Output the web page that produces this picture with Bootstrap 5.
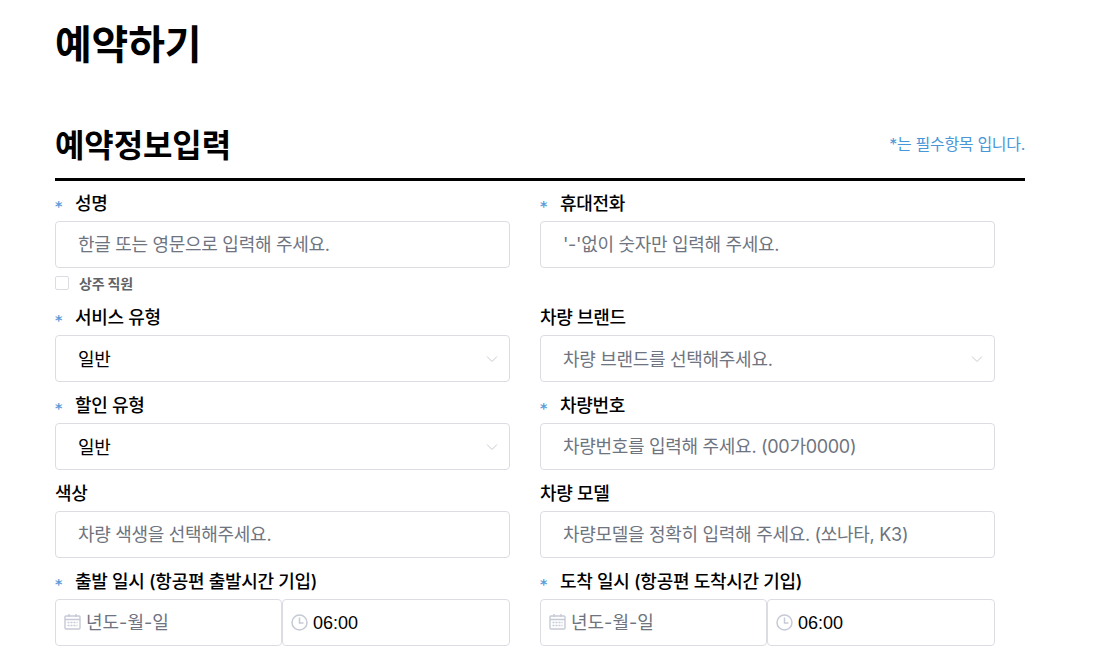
<!DOCTYPE html>
<html lang="ko">
<head>
  <meta charset="UTF-8" />
  <meta name="viewport" content="width=device-width, initial-scale=1.0"/>
  <title>예약하기</title>
  <link href="https://cdn.jsdelivr.net/npm/bootstrap@5.3.2/dist/css/bootstrap.min.css" rel="stylesheet" />
  <style>
    body {
      font-family: "Inter", "Noto Sans CJK KR", sans-serif;
      color: #000;
      overflow: hidden;
    }
    .page-wrap { width: 970px; margin-left: 55px; }
    .page-title {
      font-size: 40px;
      font-weight: 700;
      letter-spacing: -0.2px;
      line-height: 48px;
      margin: 21px 0 0;
    }
    .section-head {
      margin-top: 52px;
      height: 44px;
      border-bottom: 3px solid #000;
      box-sizing: content-box;
      padding-bottom: 13px;
    }
    .section-title {
      font-size: 32px;
      font-weight: 700;
      letter-spacing: -0.1px;
      line-height: 44px;
      margin: 6px 0 0;
    }
    .req-note { font-size: 16px; color: #4a97d8; letter-spacing: -0.3px; margin-top: 2px; }
    .form-cols {
      display: grid;
      grid-template-columns: 455px 455px;
      column-gap: 30px;
      row-gap: 10px;
      margin-top: 9px;
    }
    .fld-label {
      display: flex;
      align-items: center;
      font-size: 18px;
      font-weight: 500;
      line-height: 24px;
      height: 24px;
      padding-top: 4px;
      margin-bottom: 7px;
      letter-spacing: -0.3px;
    }
    .req-star {
      width: 20px;
      height: 24px;
      padding-top: 2px;
      color: #5b9bd9;
      font-size: 14px;
      font-weight: 700;
      letter-spacing: 0;
      flex: none;
      font-family: "DejaVu Sans", sans-serif;
    }
    .fld-input.form-control, .fld-input.form-select {
      height: 47px;
      border: 1px solid #dcdde3;
      border-radius: 4px;
      font-size: 18px;
      letter-spacing: -0.3px;
      padding: 0 22px;
      color: #000;
      box-shadow: none;
    }
    .fld-input::placeholder { color: #6e7480; opacity: 1; }
    .fld-input.form-select {
      padding-top: 2px;
      background-image: url("data:image/svg+xml,%3csvg xmlns='http://www.w3.org/2000/svg' viewBox='0 0 12 8'%3e%3cpath fill='none' stroke='%23c5c9d0' stroke-width='1' d='M1 1.500l5 5 5-5'/%3e%3c/svg%3e");
      background-position: right 11px center;
      background-size: 12px 8px;
    }
    .is-empty.form-select { color: #6e7480; }
    .staff-check { display: flex; align-items: center; gap: 10px; height: 26px; margin-top: 2px; margin-bottom: -2px; }
    .staff-check .form-check-input {
      width: 14px; height: 14px; margin: 0; border: 1px solid #dcdde3; border-radius: 2px;
    }
    .staff-check label { font-size: 14px; font-weight: 700; color: #5f6368; letter-spacing: -0.2px; }
    .dt-pair { display: grid; grid-template-columns: 227px 228px; }
    .dt-cell { position: relative; }
    .dt-cell .fld-input.form-control { padding-left: 30px; padding-bottom: 1px; letter-spacing: 0; }
    .dt-cell svg { position: absolute; left: 9px; top: 15px; }
    .dt-time.fld-input.form-control { font-family: "Liberation Sans", sans-serif; padding-bottom: 0; padding-top: 1px; }
  </style>
</head>
<body>

<div class="page-wrap">
  <h1 class="page-title">예약하기</h1>

  <div class="section-head d-flex justify-content-between align-items-center">
    <h2 class="section-title">예약정보입력</h2>
    <span class="req-note">*는 필수항목 입니다.</span>
  </div>

  <form class="form-cols">
    <div>
      <label class="fld-label"><span class="req-star">*</span>성명</label>
      <input class="form-control fld-input" type="text" placeholder="한글 또는 영문으로 입력해 주세요.">
      <div class="staff-check">
        <input class="form-check-input" type="checkbox" id="staff">
        <label for="staff">상주 직원</label>
      </div>
    </div>
    <div>
      <label class="fld-label"><span class="req-star">*</span>휴대전화</label>
      <input class="form-control fld-input" type="text" placeholder="'-'없이 숫자만 입력해 주세요.">
    </div>

    <div>
      <label class="fld-label"><span class="req-star">*</span>서비스 유형</label>
      <select class="form-select fld-input"><option>일반</option></select>
    </div>
    <div>
      <label class="fld-label">차량 브랜드</label>
      <select class="form-select fld-input is-empty"><option>차량 브랜드를 선택해주세요.</option></select>
    </div>

    <div>
      <label class="fld-label"><span class="req-star">*</span>할인 유형</label>
      <select class="form-select fld-input"><option>일반</option></select>
    </div>
    <div>
      <label class="fld-label"><span class="req-star">*</span>차량번호</label>
      <input class="form-control fld-input" type="text" placeholder="차량번호를 입력해 주세요. (00가0000)">
    </div>

    <div>
      <label class="fld-label">색상</label>
      <input class="form-control fld-input" type="text" placeholder="차량 색생을 선택해주세요.">
    </div>
    <div>
      <label class="fld-label">차량 모델</label>
      <input class="form-control fld-input" type="text" placeholder="차량모델을 정확히 입력해 주세요. (쏘나타, K3)">
    </div>

    <div>
      <label class="fld-label"><span class="req-star">*</span>출발 일시 (항공편 출발시간 기입)</label>
      <div class="dt-pair">
        <div class="dt-cell">
          <svg width="17" height="16" viewBox="0 0 17 16" fill="none" stroke="#c6cad5" stroke-width="1.4"><rect x="1" y="2" width="15" height="13" rx="1"/><path d="M1 5.500h15M5 0v3M12 0v3"/><path d="M3.500 8.500h10M3.500 11.500h10" stroke-width="1.500" stroke-dasharray="2 1"/></svg>
          <input class="form-control fld-input" type="text" placeholder="년도-월-일">
        </div>
        <div class="dt-cell">
          <svg width="17" height="17" viewBox="0 0 17 17" fill="none" stroke="#c6cad5" stroke-width="1.500"><circle cx="8.500" cy="8.500" r="7.500"/><path d="M8.500 3.500V9h4"/></svg>
          <input class="form-control fld-input dt-time" type="text" value="06:00">
        </div>
      </div>
    </div>
    <div>
      <label class="fld-label"><span class="req-star">*</span>도착 일시 (항공편 도착시간 기입)</label>
      <div class="dt-pair">
        <div class="dt-cell">
          <svg width="17" height="16" viewBox="0 0 17 16" fill="none" stroke="#c6cad5" stroke-width="1.4"><rect x="1" y="2" width="15" height="13" rx="1"/><path d="M1 5.500h15M5 0v3M12 0v3"/><path d="M3.500 8.500h10M3.500 11.500h10" stroke-width="1.500" stroke-dasharray="2 1"/></svg>
          <input class="form-control fld-input" type="text" placeholder="년도-월-일">
        </div>
        <div class="dt-cell">
          <svg width="17" height="17" viewBox="0 0 17 17" fill="none" stroke="#c6cad5" stroke-width="1.500"><circle cx="8.500" cy="8.500" r="7.500"/><path d="M8.500 3.500V9h4"/></svg>
          <input class="form-control fld-input dt-time" type="text" value="06:00">
        </div>
      </div>
    </div>
  </form>
</div>

<script src="https://cdn.jsdelivr.net/npm/bootstrap@5.3.2/dist/js/bootstrap.bundle.min.js"></script>
</body>
</html>
